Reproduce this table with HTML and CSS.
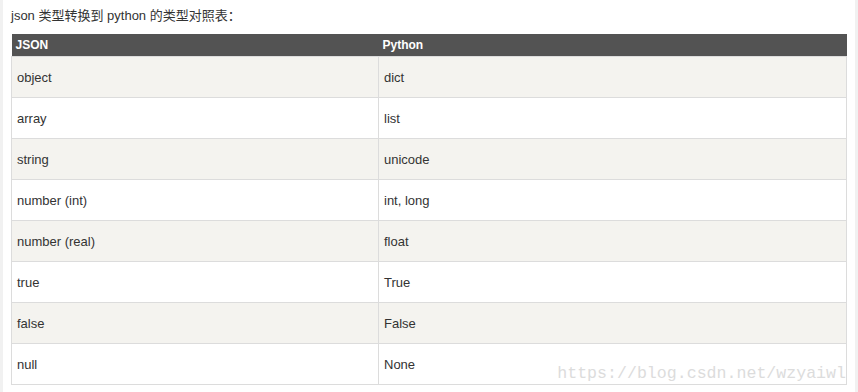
FILE: index.html
```html
<!DOCTYPE html>
<html lang="zh">
  <head>
    <meta charset="UTF-8" />
    <meta name="viewport" content="width=device-width, initial-scale=1.0" />
    <title>json 类型转换到 python</title>
    <link rel="stylesheet" href="styles.css">
  </head>
  <body>
    <div class="page">
      <p class="intro">json 类型转换到 python 的类型对照表：</p>

      <div class="table-wrap">
        <table class="types">
          <thead>
            <tr>
              <th class="col-json">JSON</th>
              <th>Python</th>
            </tr>
          </thead>
          <tbody>
            <tr><td>object</td><td>dict</td></tr>
            <tr><td>array</td><td>list</td></tr>
            <tr><td>string</td><td>unicode</td></tr>
            <tr><td>number (int)</td><td>int, long</td></tr>
            <tr><td>number (real)</td><td>float</td></tr>
            <tr><td>true</td><td>True</td></tr>
            <tr><td>false</td><td>False</td></tr>
            <tr><td>null</td><td>None</td></tr>
          </tbody>
        </table>
        <span class="watermark">https://blog.csdn.net/wzyaiwl</span>
      </div>
    </div>
  </body>
</html>
```

FILE: styles.css
```css
body {
  margin: 0;
  background-color: #fff;
  font-family: "Liberation Sans", Arial, "Noto Sans CJK SC", sans-serif;
  color: #333;
}

.page {
  height: 392px;
  border-left: 3px solid #f1f1f1;
  border-right: 3px solid #f1f1f1;
  padding: 0 8px;
  box-sizing: border-box;
  width: 858px;
}

.intro {
  margin: 0;
  padding-top: 7px;
  height: 27px;
  font-size: 13px;
  line-height: 18px;
}

.table-wrap {
  position: relative;
  width: 836px;
}

.types {
  width: 836px;
  border-collapse: collapse;
  font-size: 13px;
}

.types th {
  background-color: #535353;
  color: #fff;
  text-align: left;
  font-size: 12px;
  font-weight: 700;
  height: 22px;
  padding: 0 4px;
  box-sizing: border-box;
  line-height: 22px;
}

.types .col-json {
  width: 367px;
}

.types td {
  border: 1px solid #dcdcdc;
  height: 41px;
  padding: 0 5px;
  box-sizing: border-box;
}

.types tbody tr:nth-child(odd) td {
  background-color: #f4f3ef;
}

.watermark {
  position: absolute;
  right: 1px;
  bottom: 2px;
  font-family: "Liberation Mono", monospace;
  font-size: 16.6px;
  color: #dcdcdc;
  pointer-events: none;
}
```
